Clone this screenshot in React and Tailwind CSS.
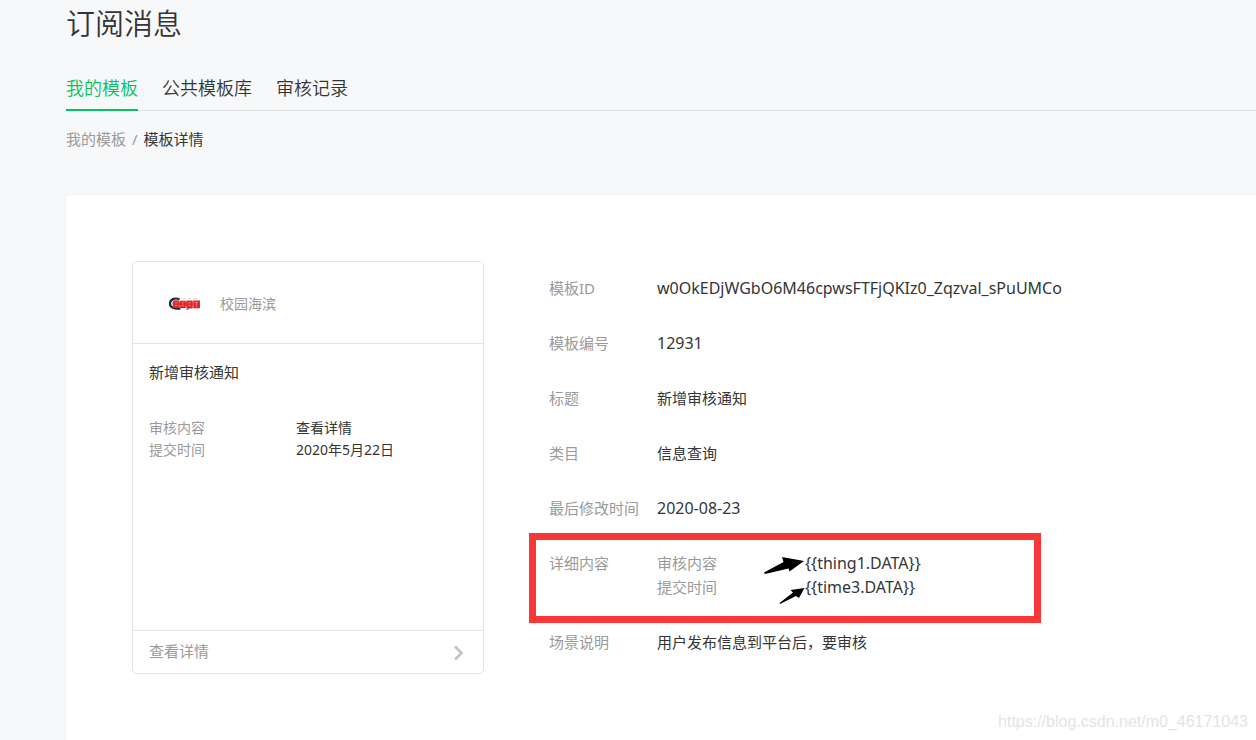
import React from "react";

const TABS = ["我的模板", "公共模板库", "审核记录"];

const DETAILS = [
  ["模板ID", "w0OkEDjWGbO6M46cpwsFTFjQKIz0_Zqzval_sPuUMCo"],
  ["模板编号", "12931"],
  ["标题", "新增审核通知"],
  ["类目", "信息查询"],
  ["最后修改时间", "2020-08-23"],
];

const KEYWORDS = [
  ["审核内容", "{{thing1.DATA}}"],
  ["提交时间", "{{time3.DATA}}"],
];

const PREVIEW = [
  ["审核内容", "查看详情"],
  ["提交时间", "2020年5月22日"],
];

function valueSize(value) {
  return /^[\x20-\x7e]+$/.test(value) ? "text-base leading-6" : "";
}

function Logo() {
  return (
    <svg className="h-4 w-8 shrink-0" viewBox="0 0 32 16" aria-hidden="true">
      <path d="M11.500 3.400C7 1.200 2 3.500 2 7.500S6 13.200 12.500 12.400" fill="none" stroke="#24282c" strokeWidth="2.200" />
      <path d="M10.500 5.200C7 4.300 4.600 5.800 4.800 8S7 11 9.500 10.800" fill="none" stroke="#7d8488" strokeWidth="1" />
      <path d="M15 2.800h3M20 2.600h3M25 2.800h4" stroke="#d0d0d0" strokeWidth="1" />
      <path d="M5 4.600h6.300v7.400H5zM11.800 4.800h6v7.200h-6zM18.300 4.600h6.400v7.800h-6.400zM25.200 4.400H32v7.800h-6.800z" fill="#e0292d" />
      <path d="M11 8h14" stroke="#e0292d" strokeWidth="3" />
      <path d="M7 6.800h2.500M7 9.500h2.500M13.500 6.800h2.500M13.500 9.500h2.500M20.300 6.800h2.400M20.300 9.500h2.400M27 6.500h3M28.500 6.500v4" fill="none" stroke="#ee7f7d" strokeWidth="0.900" />
      <path d="M18.500 13.800l2.500-1.300" stroke="#4b4f52" strokeWidth="1" />
    </svg>
  );
}

function TemplatePreview() {
  return (
    <section className="flex w-[352px] shrink-0 flex-col rounded-[5px] border border-[#e4e5e9]">
      <header className="flex h-[82px] items-center gap-5 border-b border-[#e4e5e9] px-[35px] pt-[3px]">
        <Logo />
        <span className="text-sm text-[#9a9a9a]">校园海滨</span>
      </header>
      <div className="flex-1 px-4 pt-4">
        <h2 className="text-[15px] leading-6">新增审核通知</h2>
        <dl className="mt-[33px] text-sm leading-[22px]">
          {PREVIEW.map(([name, value]) => (
            <div className="flex" key={name}>
              <dt className="w-[147px] text-[#9a9a9a]">{name}</dt>
              <dd>{value}</dd>
            </div>
          ))}
        </dl>
      </div>
      <a href="#detail" className="flex h-[43px] items-center justify-between border-t border-[#e4e5e9] px-4 pb-0.5 text-[15px] text-[#9a9a9a]">
        查看详情
        <svg className="mt-1 h-4 w-4" viewBox="0 0 16 16" fill="none" stroke="#c4c4c4" strokeWidth="2.800" aria-hidden="true">
          <path d="M4 1.500 10.500 8 4 14.500" />
        </svg>
      </a>
    </section>
  );
}

function Annotation() {
  return (
    <>
      <div className="pointer-events-none absolute -top-[18px] -left-5 h-[90px] w-[512px] border-[7px] border-[#fa3737]" />
      <svg className="pointer-events-none absolute top-0 left-[214px] h-14 w-11" viewBox="763 551 44 56" aria-hidden="true">
        <path d="M764 572.500 783.500 562 782 557 804 561 789.500 571.500 788.500 568.500 765 574Z" fill="#000" />
        <path d="M779.500 603 793 592.500 790.500 590 804.500 588 799 598 796 596 780 604Z" fill="#000" />
      </svg>
    </>
  );
}

function TemplateDetails() {
  return (
    <dl className="flex min-w-0 flex-1 flex-col gap-[31px] pt-[15px] text-[15px] leading-6">
      {DETAILS.map(([name, value]) => (
        <div className="flex" key={name}>
          <dt className="w-[108px] shrink-0 text-[#9a9a9a]">{name}</dt>
          <dd className={valueSize(value)}>{value}</dd>
        </div>
      ))}
      <div className="relative flex">
        <dt className="w-[108px] shrink-0 text-[#9a9a9a]">详细内容</dt>
        <dd>
          {KEYWORDS.map(([name, value]) => (
            <div className="flex" key={name}>
              <span className="w-[148px] text-[#9a9a9a]">{name}</span>
              <span className={valueSize(value)}>{value}</span>
            </div>
          ))}
        </dd>
        <Annotation />
      </div>
      <div className="flex">
        <dt className="w-[108px] shrink-0 text-[#9a9a9a]">场景说明</dt>
        <dd>用户发布信息到平台后，要审核</dd>
      </div>
    </dl>
  );
}

export default function App() {
  return (
    <div className="relative flex min-h-screen flex-col overflow-hidden bg-[#f7f8fa] pl-[66px] font-['Noto_Sans','Noto_Sans_CJK_SC',sans-serif] text-[#353535]">
      <h1 className="pt-1 text-[29px] leading-10 font-[350]">订阅消息</h1>
      <nav className="mt-6 flex gap-6 border-b border-[#dcdee2] text-lg leading-[41px] font-[350]">
        {TABS.map((tab, i) => (
          <a
            href="#tab"
            key={tab}
            aria-current={i === 0 ? "page" : undefined}
            className={i === 0 ? "-mb-px border-b-2 border-[#07c160] text-[#07c160]" : ""}
          >
            {tab}
          </a>
        ))}
      </nav>
      <div className="mt-4 flex gap-1.5 text-[15px] leading-6">
        <a href="#templates" className="text-[#9a9a9a]">我的模板</a>
        <span className="text-[#9a9a9a]">/</span>
        <span>模板详情</span>
      </div>
      <main className="mt-11 flex flex-1 items-stretch gap-[65px] rounded-tl-[4px] bg-white p-[66px] shadow-[0_0_2px_rgba(0,0,0,0.1)]">
        <TemplatePreview />
        <TemplateDetails />
      </main>
      <span className="pointer-events-none absolute right-2 bottom-2 font-['Liberation_Sans',sans-serif] text-base leading-5 text-[#e4e4e4]">
        https://blog.csdn.net/m0_46171043
      </span>
    </div>
  );
}
